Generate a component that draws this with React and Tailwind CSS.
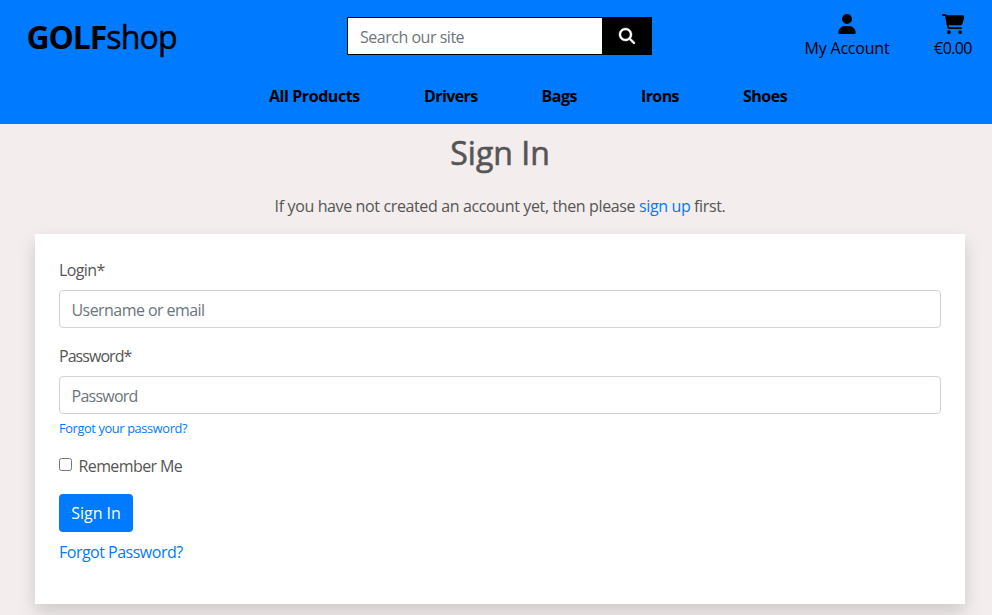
import { FaUser, FaCartShopping, FaMagnifyingGlass } from "react-icons/fa6";

const links = [
  { label: "All Products", cls: "ml-[269px] w-[155px] tracking-[-0.43px]" },
  { label: "Drivers", cls: "w-[117.5px] tracking-[-0.6px]" },
  { label: "Bags", cls: "w-[99.5px] tracking-[-0.5px]" },
  { label: "Irons", cls: "w-[102px] tracking-[-0.6px]" },
  { label: "Shoes", cls: "tracking-[-0.5px]" },
];

function Header() {
  return (
    <header className="h-[124px] bg-[#007bff] text-black">
      <div className="flex h-[72px] items-start">
        <a className="ml-[26.5px] mt-[13px] w-[320.5px] whitespace-nowrap text-[32px] leading-[48px]">
          <span className="font-bold tracking-[-1.15px]">GOLF</span>
          <span className="tracking-[-0.8px] [-webkit-text-stroke:0.5px]">shop</span>
        </a>
        <form className="mt-[17px] flex h-[38px] w-[305px] border border-black bg-black">
          <input
            className="w-[254px] bg-white px-3 pt-[2px] text-base tracking-[-0.48px] text-[#495057] outline-none placeholder:text-[#6c757d]"
            placeholder="Search our site"
          />
          <button type="button" className="flex flex-1 items-center justify-center text-white">
            <FaMagnifyingGlass size={16} stroke="white" strokeWidth={12} className="overflow-visible" />
          </button>
        </form>
        <a className="ml-[152px] mt-[14px] flex w-[86px] flex-col items-center whitespace-nowrap">
          <FaUser size={20} className="-ml-px" />
          <span className="mt-[2px] tracking-[-0.2px]">My Account</span>
        </a>
        <a className="ml-[44px] mt-[14px] flex w-[38px] flex-col items-center whitespace-nowrap">
          <FaCartShopping className="h-[20px] w-[22.5px]" />
          <span className="mt-[2px] tracking-[-0.6px]">€0.00</span>
        </a>
      </div>
      <nav className="flex pt-[12px] font-bold">
        {links.map((l) => (
          <a key={l.label} className={`whitespace-nowrap ${l.cls}`}>{l.label}</a>
        ))}
      </nav>
    </header>
  );
}

const field =
  "block h-[38px] w-full rounded-[4px] border border-[#ced4da] bg-white px-[11.5px] pt-[2px] text-base outline-none placeholder:text-[#6c757d]";

export default function App() {
  return (
    <div className="h-[615px] w-[992px] overflow-hidden bg-[#f3eded] font-['Open_Sans','Noto_Sans',sans-serif] text-base text-[#555]">
      <Header />
      <main className="pl-[35px] pr-[27px]">
        <h1 className="pt-[10px] text-center text-[32px] leading-[38px] [-webkit-text-stroke:0.6px]">Sign In</h1>
        <p className="mt-[22px] text-center tracking-[-0.37px]">
          If you have not created an account yet, then please <a className="text-[#007bff]">sign up</a> first.
        </p>
        <form className="mt-4 h-[370px] w-[930px] bg-white p-6 shadow-[0_8px_16px_rgba(0,0,0,0.15)]">
          <label className="mb-2 block tracking-[-0.6px]">Login*</label>
          <input className={`${field} tracking-[-0.56px]`} placeholder="Username or email" />
          <label className="mb-2 mt-4 block tracking-[-0.95px]">Password*</label>
          <input className={`${field} tracking-[-0.75px]`} type="password" placeholder="Password" />
          <a className="mt-1 block text-[12.8px] leading-[20px] tracking-[-0.37px] text-[#007bff]">Forgot your password?</a>
          <label className="mt-4 flex">
            <input type="checkbox" className="mr-[6.5px] mt-[4px] size-[13px]" />
            <span className="tracking-[-0.6px]">Remember Me</span>
          </label>
          <button type="button" className="mt-4 h-[38px] w-[74px] whitespace-nowrap rounded-[4px] bg-[#007bff] text-white">
            Sign In
          </button>
          <a className="mt-2 block tracking-[-0.5px] text-[#007bff]">Forgot Password?</a>
        </form>
      </main>
    </div>
  );
}
